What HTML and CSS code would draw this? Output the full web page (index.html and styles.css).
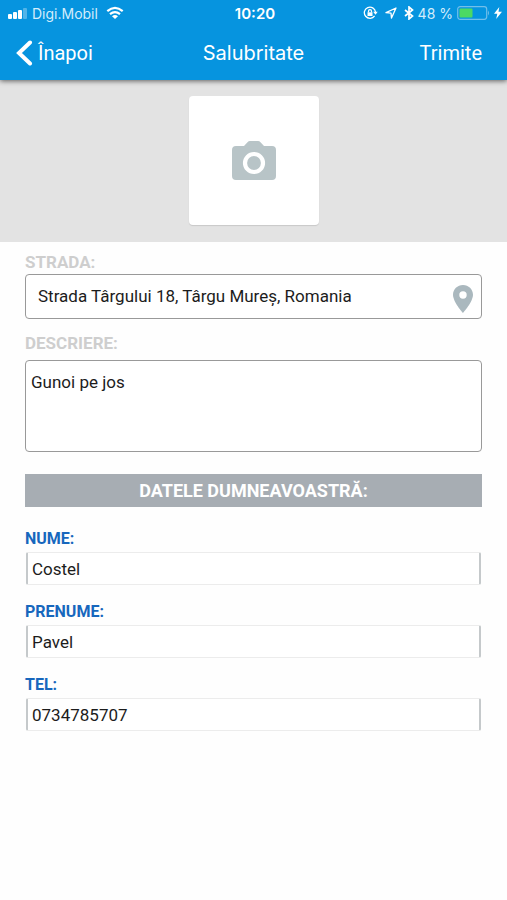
FILE: index.html
```html
<!DOCTYPE html>
<html lang="ro">
<head>
<meta charset="utf-8">
<meta name="viewport" content="width=device-width, initial-scale=1">
<title>Salubritate</title>
<link rel="stylesheet" href="styles.css">
</head>
<body>
<header class="header">
  <div class="status">
    <div class="status-left">
      <svg width="20" height="14" viewBox="0 0 20 14" fill="#fff" aria-hidden="true"><rect x="0" y="8" width="4" height="5" rx="1"/><rect x="5" y="6" width="4" height="7" rx="1"/><rect x="10" y="4" width="4" height="9" rx="1"/><rect x="15" y="2" width="4" height="11" rx="1" opacity=".3"/></svg>
      <span>Digi.Mobil</span>
      <svg class="wifi" width="18" height="14" viewBox="0 0 18 14" fill="none" stroke="#fff" stroke-width="2.2" aria-hidden="true"><path d="M1.3 5.2Q9-1.4 16.7 5.2M4 8.2Q9 4 14 8.2"/><path d="M9 13L6 10.2Q9 7.8 12 10.2Z" fill="#fff" stroke="none"/></svg>
    </div>
    <strong class="clock">10:20</strong>
    <div class="status-right">
      <svg width="15" height="14" viewBox="0 0 15 14" fill="none" stroke="#fff" stroke-width="1.3" aria-hidden="true"><path d="M11.6 9.8A5.6 5.6 0 1 1 12.5 6"/><path d="M10.2 5.7h4.5l-2.2 3z" fill="#fff" stroke="none"/><rect x="4.5" y="6.3" width="5" height="3.7" fill="#fff" stroke="none"/><path d="M5.5 6.5V5.2a1.5 1.5 0 0 1 3 0v1.3"/></svg>
      <svg class="arrow" width="12" height="12" viewBox="0 0 12 12" fill="none" stroke="#fff" stroke-width="1.3" stroke-linejoin="round" aria-hidden="true"><path d="M11 1L1 5.7l5 .4.5 5z"/></svg>
      <svg class="bluetooth" width="10" height="14" viewBox="0 0 10 14" fill="none" stroke="#fff" stroke-width="1.7" aria-hidden="true"><path d="M1 4l7.5 6L5 13V1l3.5 3L1 10"/></svg>
      <span>48 %</span>
      <svg class="battery" width="33" height="14" viewBox="0 0 33 14" aria-hidden="true"><rect x=".7" y=".7" width="29" height="12.6" rx="2.5" fill="none" stroke="#72bfea" stroke-width="1.2"/><rect x="2.5" y="2.5" width="13" height="9" rx="1" fill="#4cd964"/><path d="M31 4.500q2 2.500 0 5z" fill="#72bfea"/></svg>
      <svg width="8" height="12" viewBox="0 0 8 12" fill="#fff" aria-hidden="true"><path d="M5.3 0L0 6.8h3.3L2.2 12 8 4.8H4.5z"/></svg>
    </div>
  </div>
  <nav class="nav">
    <button class="nav-button back" type="button">
      <svg width="18" height="26" viewBox="0 0 18 26" fill="none" stroke="#fff" stroke-width="4" stroke-linecap="round" stroke-linejoin="miter" aria-hidden="true"><path d="M14 2.5L3 13l11 10.5"/></svg>
      Înapoi
    </button>
    <h1 class="title">Salubritate</h1>
    <button class="nav-button send" type="submit" form="report">Trimite</button>
  </nav>
</header>
<main>
  <section class="photo">
    <button class="photo-button" type="button" aria-label="Foto">
      <svg width="44" height="40" viewBox="0 0 44 40" aria-hidden="true"><path d="M12 5L15.500 1.200Q16.500 0 18 0h8q1.500 0 2.500 1.200L32 5h8q4 0 4 4v26q0 4-4 4H4q-4 0-4-4V9q0-4 4-4z" fill="#b8c4c7"/><circle cx="22" cy="22" r="9" fill="none" stroke="#fff" stroke-width="4.200"/></svg>
    </button>
  </section>
  <form class="form" id="report">
    <label class="label" for="street">STRADA:</label>
    <div class="street">
      <input class="street-input" id="street" type="text" value="Strada Târgului 18, Târgu Mureș, Romania">
      <svg width="20" height="28" viewBox="0 0 20 28" aria-hidden="true"><path d="M10 0C4.400 0 0 4.300 0 9.800 0 17 10 28 10 28S20 17 20 9.800C20 4.300 15.600 0 10 0zm0 6.300a3.700 3.700 0 1 1 0 7.400 3.700 3.700 0 0 1 0-7.400z" fill="#aab8be" fill-rule="evenodd"/></svg>
    </div>
    <label class="label description-label" for="description">DESCRIERE:</label>
    <textarea class="description" id="description">Gunoi pe jos</textarea>
    <h2 class="section-title">DATELE DUMNEAVOASTRĂ:</h2>
    <div class="field">
      <label class="field-label" for="last-name">NUME:</label>
      <input class="field-input" id="last-name" type="text" value="Costel">
    </div>
    <div class="field">
      <label class="field-label" for="first-name">PRENUME:</label>
      <input class="field-input" id="first-name" type="text" value="Pavel">
    </div>
    <div class="field">
      <label class="field-label" for="phone">TEL:</label>
      <input class="field-input" id="phone" type="tel" value="0734785707">
    </div>
  </form>
</main>
</body>
</html>
```
FILE: styles.css
```css
* {
  box-sizing: border-box;
}

body {
  margin: 0;
  background: #fefefe;
  color: #1c1c1c;
  font-family: Roboto, "Liberation Sans", sans-serif;
  font-size: 17px;
}

button,
input,
textarea {
  font: inherit;
  color: inherit;
}

svg {
  display: block;
  flex: none;
}

.header {
  position: relative;
  background: #0694df;
  color: #fff;
  box-shadow: 0 1px 5px rgba(0, 0, 0, 0.6);
}

.status {
  display: grid;
  grid-template-columns: 1fr auto 1fr;
  align-items: center;
  height: 26px;
  padding: 0 5px 0 8px;
  font-family: Inter, sans-serif;
  font-size: 14px;
}

.status-left,
.status-right {
  display: flex;
  align-items: center;
  color: #d3edfb;
}

.status-left {
  gap: 4px;
}

.status-right {
  justify-content: flex-end;
  gap: 4px;
}

.wifi {
  margin-left: 4px;
}

.arrow,
.bluetooth {
  margin-left: 3px;
}

.clock {
  font-size: 15px;
  font-weight: 600;
}

.nav {
  display: grid;
  grid-template-columns: 1fr auto 1fr;
  align-items: center;
  height: 54px;
  padding: 0 16px;
}

.nav-button {
  display: flex;
  align-items: center;
  gap: 4px;
  padding: 0;
  border: 0;
  background: none;
  font-size: 20px;
}

.back {
  justify-self: start;
}

.send {
  justify-self: end;
  margin-right: 9px;
}

.title {
  margin: 0;
  font-family: Inter, sans-serif;
  font-size: 20px;
  font-weight: 400;
}

.photo {
  display: flex;
  justify-content: center;
  padding: 16px 0 17px;
  background: #e3e3e3;
}

.photo-button {
  display: grid;
  place-items: center;
  width: 130px;
  height: 129px;
  padding: 0;
  border: 0;
  border-radius: 4px;
  background: #fff;
  box-shadow: 0 1px 1px rgba(0, 0, 0, 0.12);
}

.form {
  display: flex;
  flex-direction: column;
  padding: 10px 25px 24px;
}

.label {
  line-height: 20px;
  color: #cecece;
  font-size: 17px;
  font-weight: 700;
}

.street {
  display: flex;
  align-items: center;
  height: 45px;
  margin-top: 2px;
  padding: 4px 8px 0 12px;
  border: 1px solid #999;
  border-radius: 4px;
  background: #fff;
}

.street-input {
  flex: 1;
  min-width: 0;
  height: 32px;
  margin-bottom: 6px;
  padding: 0;
  border: 0;
  outline: 0;
  background: none;
}

.description-label {
  margin-top: 14px;
}

.description {
  display: block;
  height: 92px;
  margin-top: 7px;
  padding: 11px 5px;
  border: 1px solid #999;
  border-radius: 4px;
  outline: 0;
  background: #fff;
  line-height: 20px;
  resize: none;
}

.section-title {
  margin: 22px 0;
  background: #a7adb3;
  color: #fff;
  font-size: 18px;
  font-weight: 700;
  line-height: 33px;
  text-align: center;
}

.field {
  display: flex;
  flex-direction: column;
  gap: 3px;
  margin-bottom: 17px;
}

.field-label {
  line-height: 20px;
  color: #1767bd;
  font-size: 16px;
  font-weight: 700;
}

.field-input {
  height: 33px;
  margin: 0 1px;
  padding: 0 4px;
  border: 1px solid #ececec;
  border-right: 2px solid #c5c9cb;
  border-left: 2px solid #c5c9cb;
  border-radius: 2px;
  outline: 0;
  background: #fff;
}
```
